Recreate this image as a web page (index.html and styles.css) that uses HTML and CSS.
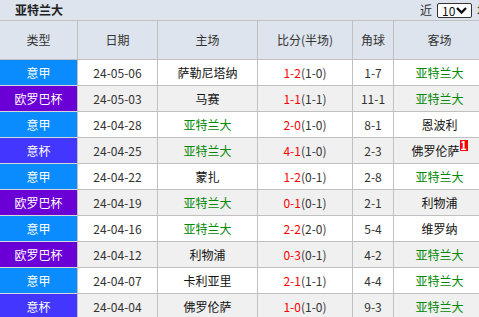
FILE: index.html
```html
<!DOCTYPE html>
<html lang="zh">
<head>
<meta charset="utf-8">
<title>亚特兰大</title>
<link rel="stylesheet" href="styles.css">
</head>
<body>
<div class="wrap">
  <div class="title">
    <h1>亚特兰大</h1>
    <div class="filter">
      <span>近</span>
      <span class="select">10<svg class="chev" width="11" height="7" viewBox="0 0 11 7"><path d="M1 1 L5.5 5.5 L10 1" fill="none" stroke="#111" stroke-width="2.4"/></svg></span>
      <span>场</span>
    </div>
  </div>
  <div class="row head">
    <div class="cell">类型</div><div class="cell">日期</div><div class="cell">主场</div><div class="cell">比分(半场)</div><div class="cell">角球</div><div class="cell">客场</div>
  </div>
  <div class="row">
    <div class="cell t serie">意甲</div><div class="cell">24-05-06</div><div class="cell team">萨勒尼塔纳</div><div class="cell"><span class="ft">1-2</span>(1-0)</div><div class="cell">1-7</div><div class="cell team me">亚特兰大</div>
  </div>
  <div class="row alt">
    <div class="cell t uel">欧罗巴杯</div><div class="cell">24-05-03</div><div class="cell team">马赛</div><div class="cell"><span class="ft">1-1</span>(1-1)</div><div class="cell">11-1</div><div class="cell team me">亚特兰大</div>
  </div>
  <div class="row">
    <div class="cell t serie">意甲</div><div class="cell">24-04-28</div><div class="cell team me">亚特兰大</div><div class="cell"><span class="ft">2-0</span>(1-0)</div><div class="cell">8-1</div><div class="cell team">恩波利</div>
  </div>
  <div class="row alt">
    <div class="cell t cup">意杯</div><div class="cell">24-04-25</div><div class="cell team me">亚特兰大</div><div class="cell"><span class="ft">4-1</span>(1-0)</div><div class="cell">2-3</div><div class="cell team">佛罗伦萨<span class="badge">1</span></div>
  </div>
  <div class="row">
    <div class="cell t serie">意甲</div><div class="cell">24-04-22</div><div class="cell team">蒙扎</div><div class="cell"><span class="ft">1-2</span>(0-1)</div><div class="cell">2-8</div><div class="cell team me">亚特兰大</div>
  </div>
  <div class="row alt">
    <div class="cell t uel">欧罗巴杯</div><div class="cell">24-04-19</div><div class="cell team me">亚特兰大</div><div class="cell"><span class="ft">0-1</span>(0-1)</div><div class="cell">2-1</div><div class="cell team">利物浦</div>
  </div>
  <div class="row">
    <div class="cell t serie">意甲</div><div class="cell">24-04-16</div><div class="cell team me">亚特兰大</div><div class="cell"><span class="ft">2-2</span>(2-0)</div><div class="cell">5-4</div><div class="cell team">维罗纳</div>
  </div>
  <div class="row alt">
    <div class="cell t uel">欧罗巴杯</div><div class="cell">24-04-12</div><div class="cell team">利物浦</div><div class="cell"><span class="ft">0-3</span>(0-1)</div><div class="cell">4-2</div><div class="cell team me">亚特兰大</div>
  </div>
  <div class="row">
    <div class="cell t serie">意甲</div><div class="cell">24-04-07</div><div class="cell team">卡利亚里</div><div class="cell"><span class="ft">2-1</span>(1-1)</div><div class="cell">4-4</div><div class="cell team me">亚特兰大</div>
  </div>
  <div class="row alt">
    <div class="cell t cup">意杯</div><div class="cell">24-04-04</div><div class="cell team">佛罗伦萨</div><div class="cell"><span class="ft">1-0</span>(1-0)</div><div class="cell">9-3</div><div class="cell team me">亚特兰大</div>
  </div>
</div>
</body>
</html>
```
FILE: styles.css
```css
html, body {
  margin: 0;
  padding: 0;
  overflow: hidden;
  background: #fff;
}
body {
  font-family: "Noto Sans CJK SC", "Noto Sans", sans-serif;
  font-size: 12px;
  color: #333;
}
.wrap {
  width: 486px;
}
.title {
  height: 20px;
  border-bottom: 1px solid #c0c0c0;
  background: #dde4ed;
  display: flex;
  align-items: center;
  padding-left: 15px;
}
.title h1 {
  margin: 0;
  font-size: 12px;
  font-weight: bold;
  color: #222;
  line-height: 20px;
}
.filter {
  margin-left: auto;
  margin-right: -3px;
  display: flex;
  align-items: center;
  gap: 5px;
  line-height: 14px;
}
.select {
  box-sizing: border-box;
  width: 35px;
  height: 15px;
  margin-top: 1px;
  background: #fff;
  border: 1px solid #333;
  border-radius: 2px;
  display: flex;
  align-items: center;
  padding-left: 4px;
  gap: 1px;
  color: #111;
}
.chev {
  display: block;
}
.row {
  display: grid;
  grid-template-columns: 78px 80px 100px 95px 41px 92px;
  background: #fff;
}
.row.alt {
  background: #f0f0f0;
}
.row.head {
  background: #dde4ed;
}
.cell {
  box-sizing: border-box;
  height: 26px;
  border-right: 1px solid #c0c0c0;
  border-bottom: 1px solid #c0c0c0;
  display: flex;
  align-items: center;
  justify-content: center;
  white-space: nowrap;
  line-height: 16px;
}
.head .cell {
  height: 39px;
  color: #333;
}
.team {
  color: #111;
}
.me {
  color: #008800;
}
.ft {
  color: #ff0000;
}
.t {
  color: #fff;
  border-bottom-color: #d8d8d8;
}
.serie {
  background: #0a8cff;
}
.uel {
  background: #6a00d6;
}
.cup {
  background: #4337ff;
}
.badge {
  display: inline-block;
  width: 8px;
  height: 11px;
  line-height: 11px;
  background: #f00;
  color: #fff;
  font-weight: bold;
  font-size: 11px;
  text-align: center;
  align-self: flex-start;
  margin-top: 2px;
}
```
